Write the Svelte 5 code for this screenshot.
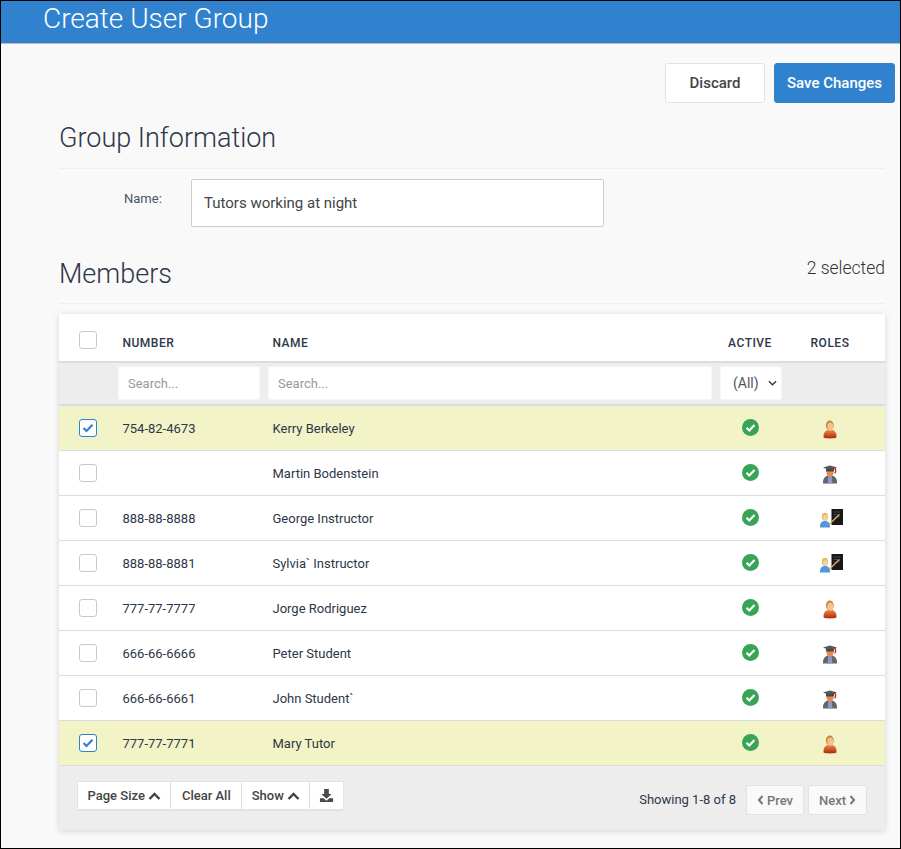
<script>
  const rows = [
    { num: '754-82-4673', name: 'Kerry Berkeley', role: 'tutor', sel: true },
    { num: '', name: 'Martin Bodenstein', role: 'student', sel: false },
    { num: '888-88-8888', name: 'George Instructor', role: 'instructor', sel: false },
    { num: '888-88-8881', name: 'Sylvia` Instructor', role: 'instructor', sel: false },
    { num: '777-77-7777', name: 'Jorge Rodriguez', role: 'tutor', sel: false },
    { num: '666-66-6666', name: 'Peter Student', role: 'student', sel: false },
    { num: '666-66-6661', name: 'John Student`', role: 'student', sel: false },
    { num: '777-77-7771', name: 'Mary Tutor', role: 'tutor', sel: true }
  ];
</script>

{#snippet chevUp()}
  <svg class="chev" viewBox="0 0 13 8" width="13" height="8"><path d="M1.500 7 6.500 2l5 5" fill="none" stroke="currentColor" stroke-width="2.400"/></svg>
{/snippet}

{#snippet tutor()}
  <svg viewBox="0 0 20 20" width="20" height="20">
    <defs>
      <linearGradient id="tb" x1="0" y1="0" x2="0" y2="1"><stop offset="0" stop-color="#ee8a3c"/><stop offset="1" stop-color="#a92a10"/></linearGradient>
    </defs>
    <path d="M3.500 18.500c-.3-4 1-6.500 4-7.500h5c3 1 4.300 3.500 4 7.500-3 1.200-10 1.200-13 0z" fill="url(#tb)"/>
    <ellipse cx="9.800" cy="6.500" rx="3.900" ry="5" fill="#bd8a2c"/>
    <ellipse cx="10.300" cy="7.700" rx="3" ry="4.100" fill="#f2c196"/>
  </svg>
{/snippet}

{#snippet student()}
  <svg viewBox="0 0 20 20" width="20" height="20">
    <path d="M3 19.500c-.3-4.500 1.500-7 5-8h4c3.500 1 5.300 3.500 5 8z" fill="#62656b"/>
    <path d="M8.300 11.500h3.400l.6 8H7.700z" fill="#8d9bc4"/>
    <ellipse cx="10" cy="8.500" rx="3.500" ry="4" fill="#e8894f"/>
    <path d="M3 3.500 10 1.500l7 2-7 3z" fill="#54575d"/>
    <path d="M6 5v2.500h8V5z" fill="#46484d"/>
    <path d="M14 3.500c2 1 2.200 4 .7 5.700" fill="none" stroke="#c8271c" stroke-width="1.400"/>
  </svg>
{/snippet}

{#snippet instructor()}
  <svg viewBox="0 0 28 20" width="28" height="20">
    <rect x="15.500" y="0" width="11.500" height="16" fill="#17181b"/>
    <path d="M17.500 3h7M17.500 5.500h5M17.500 8h6" stroke="#5c5c5c" stroke-width=".7"/>
    <path d="M4 18.500c-.2-4 1.300-6.500 5-6.500s5.200 2.500 5 6.500z" fill="#4f97e0"/>
    <ellipse cx="9" cy="7.800" rx="3.100" ry="4" fill="#e3bd58"/>
    <ellipse cx="9.400" cy="8.800" rx="2.200" ry="2.800" fill="#f5d0aa"/>
    <path d="m13 15.500 10.500-10" stroke="#d9b04a" stroke-width="1.400"/>
  </svg>
{/snippet}

<div class="page">
  <header class="banner"><h1>Create User Group</h1></header>

  <div class="actions">
    <button class="btn light">Discard</button>
    <button class="btn primary">Save Changes</button>
  </div>

  <main class="content">
    <h2 class="section info">Group Information</h2>
    <div class="field">
      <span class="field-label">Name:</span>
      <input class="name-input" value="Tutors working at night" />
    </div>

    <div class="section members">
      <h2>Members</h2>
      <span class="count">2 selected</span>
    </div>

    <section class="table">
      <div class="row head">
        <div class="cell"><span class="box"></span></div>
        <div class="cell">NUMBER</div>
        <div class="cell">NAME</div>
        <div class="cell center">ACTIVE</div>
        <div class="cell center">ROLES</div>
      </div>
      <div class="row filters">
        <div></div>
        <input class="search" placeholder="Search..." />
        <input class="search" placeholder="Search..." />
        <div class="select">
          <span>(All)</span>
          <svg viewBox="0 0 10 6" width="9" height="6"><path d="M1 1l4 4 4-4" fill="none" stroke="#333" stroke-width="1.400"/></svg>
        </div>
        <div></div>
      </div>
      {#each rows as r}
        <div class="row body" class:sel={r.sel}>
          <div class="cell">
            <span class="box" class:on={r.sel}>
              {#if r.sel}<svg viewBox="0 0 12 10" width="12" height="10"><path d="M1.500 5 4.500 8 10.500 1.800" fill="none" stroke="#3182ce" stroke-width="2.200"/></svg>{/if}
            </span>
          </div>
          <div class="cell text">{r.num}</div>
          <div class="cell text">{r.name}</div>
          <div class="cell center">
            <svg viewBox="0 0 17 17" width="17" height="17"><circle cx="8.500" cy="8.500" r="8.500" fill="#38a456"/><path d="M4.500 8.700 7.300 11.500 12.500 6" fill="none" stroke="#fff" stroke-width="2.200"/></svg>
          </div>
          <div class="cell center role">
            {#if r.role === 'tutor'}{@render tutor()}{:else if r.role === 'student'}{@render student()}{:else}{@render instructor()}{/if}
          </div>
        </div>
      {/each}
      <div class="footer">
        <div class="group">
          <button>Page Size {@render chevUp()}</button>
          <button class="clear">Clear All</button>
          <button>Show {@render chevUp()}</button>
          <button class="dl" aria-label="Download">
            <svg viewBox="0 0 16 16" width="15" height="15"><path d="M5.500 1h5v5.500h3L8 11.500 2.500 6.500h3z" fill="#4a4a4a"/><path d="M1 11h4l3 2.500 3-2.500h4v4H1z" fill="#4a4a4a"/></svg>
          </button>
        </div>
        <div class="pager">
          <span class="showing">Showing 1-8 of 8</span>
          <button class="pg">
            <svg viewBox="0 0 7 10" width="7" height="10"><path d="M5.500 1 2 5l3.500 4" fill="none" stroke="currentColor" stroke-width="2"/></svg>
            Prev
          </button>
          <button class="pg next">
            Next
            <svg viewBox="0 0 7 10" width="7" height="10"><path d="M1.500 1 5 5 1.500 9" fill="none" stroke="currentColor" stroke-width="2"/></svg>
          </button>
        </div>
      </div>
    </section>
  </main>
</div>

<style>
  :global(body) { margin: 0; background: #000; }
  .page {
    box-sizing: border-box;
    width: 899px;
    height: 847px;
    margin: 1px;
    background: #f9f9f9;
    font-family: Roboto, sans-serif;
    overflow: hidden;
    color: #2d3748;
  }
  .banner {
    box-sizing: border-box;
    height: 43px;
    background: #3182ce;
    border-bottom: 1px solid #b5bcc4;
    padding-left: 42px;
  }
  h1 {
    margin: 0;
    color: #fff;
    font-weight: 300;
    font-size: 28px;
    line-height: 36px;
  }
  .actions {
    display: flex;
    justify-content: flex-end;
    gap: 9px;
    padding: 19px 5px 0 0;
  }
  .btn {
    box-sizing: border-box;
    height: 40px;
    border-radius: 3px;
    font: 500 15px Roboto, sans-serif;
    padding: 0;
  }
  .btn.light { width: 100px; background: #fff; border: 1px solid #e2e2e2; color: #444; }
  .btn.primary { width: 121px; background: #3182ce; border: 1px solid #3182ce; color: #fff; }
  .content { padding: 0 15px 0 58px; }
  .section { border-bottom: 1px solid #edf0f3; }
  h2 {
    margin: 0;
    font-weight: 300;
    font-size: 27px;
    color: #2d3748;
  }
  .info { padding: 17px 0 11px; line-height: 37px; }
  .field { display: flex; align-items: flex-start; padding-top: 10px; }
  .field-label {
    box-sizing: border-box;
    width: 132px;
    padding: 12px 0 0 65px;
    font-size: 13px;
    line-height: 16px;
    color: #4a5568;
  }
  .name-input {
    box-sizing: border-box;
    width: 413px;
    height: 48px;
    padding: 0 12px;
    border: 1px solid #ccccd6;
    border-radius: 2px;
    background: #fff;
    font: 15px Roboto, sans-serif;
    color: #444;
    outline: none;
  }
  .members {
    display: flex;
    justify-content: space-between;
    align-items: flex-start;
    margin-top: 23px;
    padding-bottom: 8px;
  }
  .members h2 { line-height: 42px; height: 42px; padding-top: 3px; }
  .count { font-size: 17.500px; font-weight: 300; line-height: 22px; padding-top: 7px; color: #333; }
  .table {
    margin-top: 10px;
    background: #fff;
    box-shadow: 0 1px 6px rgba(0, 0, 0, .15);
  }
  .row {
    display: grid;
    grid-template-columns: 63.500px 150px 1fr 50px 110px;
    align-items: center;
  }
  .cell { font-size: 13px; color: #2d3748; display: flex; align-items: center; }
  .cell:first-child { padding-left: 20px; }
  .center { justify-content: center; }
  .head {
    box-sizing: border-box;
    height: 49px;
    border-bottom: 2px solid #dcdcdc;
  }
  .head .cell { font-size: 12px; font-weight: 500; letter-spacing: .5px; color: #2d3748; padding-top: 11px; }
  .head .cell:first-child { padding-top: 5px; }
  .filters {
    box-sizing: border-box;
    height: 43px;
    background: #ededed;
    border-bottom: 2px solid #dcdcdc;
    grid-template-columns: 51px 142px 444px 62px 1fr;
    column-gap: 8px;
    padding-bottom: 1px;
  }
  .search {
    box-sizing: border-box;
    height: 34px;
    width: 100%;
    min-width: 0;
    padding: 0 9px;
    border: 1px solid #f6f6f6;
    border-radius: 2px;
    background: #fff;
    font: 13px Roboto, sans-serif;
    outline: none;
  }
  .search::placeholder { color: #999; opacity: 1; }
  .select {
    box-sizing: border-box;
    height: 34px;
    width: 62px;
    display: flex;
    align-items: center;
    justify-content: space-between;
    padding: 0 4px 0 12px;
    background: #fff;
    border-radius: 2px;
    border: 1px solid #f6f6f6;
    font-size: 14px;
    color: #555;
  }
  .body {
    box-sizing: border-box;
    height: 45px;
    background: #fff;
    border-bottom: 1px solid #dcdcdc;
  }
  .body .cell { padding-bottom: 1px; }
  .body .cell.text { padding-bottom: 0; padding-top: 1px; }
  .body.sel { background: #f2f3c6; }
  .body:last-of-type { border-bottom: 0; }
  .role svg { display: block; margin-top: 3px; }
  .box {
    box-sizing: border-box;
    width: 18px;
    height: 18px;
    border: 1px solid #c9c9c9;
    border-radius: 3px;
    background: #fff;
    display: inline-flex;
    align-items: center;
    justify-content: center;
  }
  .box.on { border-color: #3182ce; }
  .footer {
    box-sizing: border-box;
    height: 64px;
    background: #ededed;
    display: flex;
    justify-content: space-between;
    padding: 15px 18px 0;
    align-items: flex-start;
  }
  .group {
    display: flex;
    background: #fff;
    border: 1px solid #e2e2e2;
    border-bottom-width: 2px;
    border-radius: 2px;
    height: 27px;
  }
  .group button {
    border: 0;
    border-right: 1px solid #dedede;
    background: #fff;
    font: 500 13px Roboto, sans-serif;
    color: #444;
    padding: 0 9.500px;
    display: flex;
    align-items: center;
    gap: 3px;
    height: 27px;
    white-space: nowrap;
  }
  .group button.clear { padding: 0 10.500px; }
  .group button.dl { padding: 0 9px; border-right: 0; }
  .chev { display: block; }
  .pager { display: flex; align-items: center; padding-top: 4px; }
  .showing { font-size: 13px; margin: 0 10px 2px 0; }
  .pg {
    box-sizing: border-box;
    height: 30px;
    padding: 0;
    width: 58px;
    margin-right: 4px;
    background: #f9f9f9;
    border: 1px solid #e2e2e2;
    border-radius: 2px;
    font: 500 13px Roboto, sans-serif;
    color: #777;
    display: flex;
    align-items: center;
    justify-content: center;
    gap: 3px;
  }
  .pg.next { width: 59px; margin-right: 0; }
</style>
